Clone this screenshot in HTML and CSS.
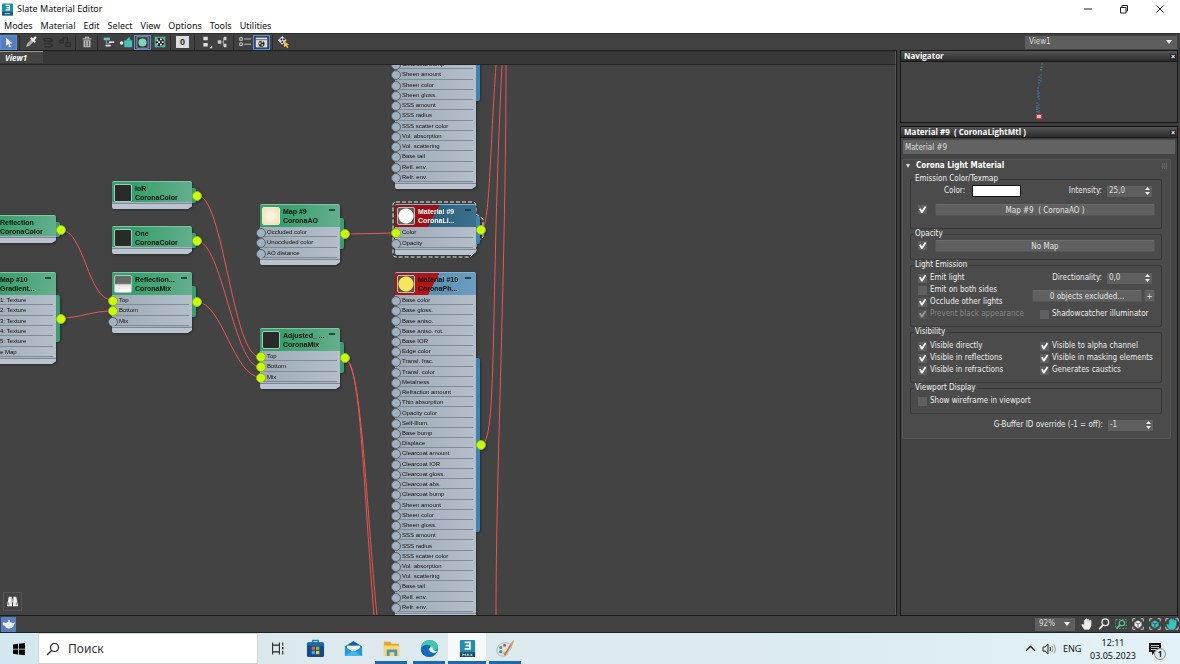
FILE: index.html
```html
<!DOCTYPE html>
<html lang="en">
<head>
<meta charset="utf-8">
<title>Slate Material Editor</title>
<link rel="stylesheet" href="styles.css">
</head>
<body>
<header class="titlebar">
  <svg class="app-logo" viewBox="0 0 12 13"><rect x="0" width="12" height="13" rx="1" fill="#1a8fae"/><rect y="9" width="12" height="4" fill="#1b5870"/><path d="M4 2h4v5H4M5 4.500h3" fill="none" stroke="#fff" stroke-width="1.300"/><path d="M3 11h6" stroke="#b8dbe5"/></svg>
  <h1>Slate Material Editor</h1>
  <div class="window-buttons">
    <button aria-label="Minimize"><svg viewBox="0 0 10 10"><path d="M1 5h8"/></svg></button>
    <button aria-label="Restore"><svg viewBox="0 0 10 10"><path d="M1.500 3.500h5.500v5.500h-5.500zM3 3.500V1.500h5.500v5.500H7"/></svg></button>
    <button aria-label="Close"><svg viewBox="0 0 10 10"><path d="M1.500 1.500l7 7M8.500 1.500l-7 7"/></svg></button>
  </div>
</header>
<nav class="menubar">
  <button>Modes</button><button>Material</button><button>Edit</button><button>Select</button><button>View</button><button>Options</button><button>Tools</button><button>Utilities</button>
</nav>
<div class="toolbar">
  <button class="on fill" aria-label="Select"><svg viewBox="0 0 16 16"><path d="M5 2v10l2.500-2 1.700 4 2-1-1.700-3.700H13z" fill="#f4e9e4"/></svg></button>
  <i class="sep"></i>
  <button aria-label="Pick material"><svg viewBox="0 0 16 16"><path d="M3 13l1-3 5-5 2 2-5 5z" fill="#aaa" stroke="#ddd" stroke-width=".6"/><path d="M8.500 4l3.500 3.500M10 6l3-3" stroke="#eee" stroke-width="2.600" stroke-linecap="round"/></svg></button>
  <button aria-label="Put material to scene" disabled><svg viewBox="0 0 16 16"><path d="M3 4h8l2 2-2 1H4zM3 10h8l2 2-2 1.500H4M9 8l4-1" fill="none" stroke="#2b2b2b" stroke-width="1.300"/></svg></button>
  <button aria-label="Assign material" disabled><svg viewBox="0 0 16 16"><path d="M3 7l4-4h4v4M2 6h4v3H2zM9 9h5v4H9z" fill="none" stroke="#2b2b2b" stroke-width="1.300"/></svg></button>
  <i class="sep"></i>
  <button aria-label="Delete"><svg viewBox="0 0 16 16"><path d="M3 4.500h10M6 4V2.500h4V4" fill="none" stroke="#ddd"/><path d="M4 6h8v8H4z" fill="#bbb"/><path d="M6.500 7v6M9.500 7v6" stroke="#444"/></svg></button>
  <i class="sep"></i>
  <button aria-label="Move children"><svg viewBox="0 0 16 16"><path d="M2 3h7v3H2z" fill="#5cc"/><path d="M8 7h6v2H8zM4 11h6v2H4z" fill="#ddd"/><path d="M5 6v4h4" stroke="#aaa" fill="none"/></svg></button>
  <button aria-label="Hide unused nodeslots"><svg viewBox="0 0 16 16"><path d="M6 6h9v8H6z" fill="#45c3b5"/><path d="M8 6l4-4 1 4z" fill="#45c3b5"/><circle cx="3" cy="9" r="2" fill="#eee"/></svg></button>
  <button class="on" aria-label="Show shaded material"><svg viewBox="0 0 16 16"><path d="M1 1h14v14H1z" fill="#333" stroke="#aaa"/><circle cx="8" cy="8" r="5" fill="#7bd6c8"/></svg></button>
  <button aria-label="Show background"><svg viewBox="0 0 16 16"><path d="M2 2h12v12H2z" fill="#50b9a8"/><circle cx="8" cy="8" r="5" fill="#222"/><path d="M4 5h2v2H4zM8 4h2v2H8zM6 7h2v2H6zM10 7h2v2h-2zM4 9h2v2H4zM8 10h2v2H8z" fill="#fff"/></svg></button>
  <i class="sep"></i>
  <button class="channel" aria-label="Material ID channel">0</button>
  <i class="sep"></i>
  <button aria-label="Lay out vertical"><svg viewBox="0 0 16 16"><path d="M5 2h5v4H5zM5 9h5v4H5zM15 12v3h-3z" fill="#ddd"/></svg></button>
  <button aria-label="Lay out children"><svg viewBox="0 0 16 16"><path d="M2 6h4v4H2zM9 2h3v4H9zM9 10h3v4H9z" fill="#ccc"/><path d="M6 8h3M8.500 3v10" stroke="#aaa"/></svg></button>
  <i class="sep"></i>
  <button aria-label="Parameter list"><svg viewBox="0 0 16 16"><path d="M7 4.500h8M7 10.500h8" stroke="#ccc"/><path d="M2 3h3v3H2zM2 9h3v3H2z" fill="none" stroke="#ddd"/></svg></button>
  <button class="on" aria-label="Material map browser"><svg viewBox="0 0 16 16"><path d="M1 2h14v12H1z" fill="#ddd"/><path d="M1 4.500h14" stroke="#555"/><circle cx="8" cy="9.500" r="3.800" fill="#222"/><path d="M5 8h2v2H5zM8 6h2v2H8zM8 10h2v2H8z" fill="#eee"/></svg></button>
  <i class="sep"></i>
  <button aria-label="Select by material"><svg viewBox="0 0 16 16"><path d="M6 1l5 5-5 5-5-5z" fill="#ddd"/><path d="M4 4h2v2H4zM7 4h2v2H7zM5 7h2v2H5z" fill="#222"/><path d="M8 7v7l2-1.500 2 2.500 1-1-1.500-3H14z" fill="#f2c14a"/></svg></button>
  <label class="combo view-combo"><select aria-label="View"><option>View1</option></select></label>
</div>

<main class="workspace">
  <section class="view">
    <div class="tabs"><button class="tab">View1</button></div>
    <div class="canvas">
      <svg class="wires" width="100%" height="100%">
        <path d="M61 165C84 165 88 235 112 235M61 253C80 253 92 246 112 246M197 130C224 130 232 292 260 292M197 176C222 176 234 302 260 302M197 237C222 237 234 312 260 312M345 169L398 168M345 294C360 294 362 400 374 551M345 294C362 300 366 440 377 551M481 165C490 165 490 80 496 0M481 380C498 380 490 240 502 0M496 551C496 400 506 200 506 0"/>
      </svg>

      <article class="node color cut reflection"><header><i class="thumb dark"></i><h2>Reflection<br>CoronaColor</h2></header><footer></footer><i class="out"></i></article>
      <article class="node cut gradient"><header><i class="thumb dark"></i><h2>Map #10<br>Gradient...</h2><i class="fold"></i></header>
        <ul><li>1: Texture</li><li>2: Texture</li><li>3: Texture</li><li>4: Texture</li><li>5: Texture</li><li>e Map</li></ul><footer></footer><i class="out"></i></article>
      <article class="node color ior"><header><i class="thumb dark"></i><h2>IoR<br>CoronaColor</h2></header><footer></footer><i class="out"></i></article>
      <article class="node color one"><header><i class="thumb dark"></i><h2>One<br>CoronaColor</h2></header><footer></footer><i class="out"></i></article>
      <article class="node mix"><header><i class="thumb half"></i><h2>Reflection...<br>CoronaMix</h2><i class="fold"></i></header>
        <ul><li class="linked">Top</li><li class="linked">Bottom</li><li>Mix</li></ul><footer></footer><i class="out"></i></article>
      <article class="node adjusted"><header><i class="thumb dark"></i><h2>Adjusted_ ...<br>CoronaMix</h2><i class="fold"></i></header>
        <ul><li class="linked">Top</li><li class="linked">Bottom</li><li class="linked">Mix</li></ul><footer></footer><i class="out"></i></article>
      <article class="node ao"><header><i class="thumb cream"></i><h2>Map #9<br>CoronaAO</h2><i class="fold"></i></header>
        <ul><li>Occluded color</li><li>Unoccluded color</li><li>AO distance</li></ul><footer></footer><i class="out"></i></article>

      <article class="node blue upper">
        <ul><li>Clearcoat bump</li><li>Sheen amount</li><li>Sheen color</li><li>Sheen gloss.</li><li>SSS amount</li><li>SSS radius</li><li>SSS scatter color</li><li>Vol. absorption</li><li>Vol. scattering</li><li>Base tail</li><li>Refl. env.</li><li>Refr. env.</li></ul><footer></footer><i class="out"></i></article>

      <article class="node blue light">
        <svg class="marquee" viewBox="0 0 92 58"><path d="M4 1H80Q84 1 84 5V13L91 18V36L84 42V50L78 56H4Q1 56 1 53V4Q1 1 4 1Z"/></svg>
        <header><i class="thumb ball"></i><h2>Material #9<br>CoronaLi...</h2><i class="fold"></i></header>
        <ul><li class="linked">Color</li><li>Opacity</li></ul><footer></footer><i class="out"></i></article>

      <article class="node blue physical"><header><i class="thumb ball yellow"></i><h2>Material #10<br>CoronaPh...</h2><i class="fold"></i></header>
        <ul><li>Base color</li><li>Base gloss.</li><li>Base aniso.</li><li>Base aniso. rot.</li><li>Base IOR</li><li>Edge color</li><li>Transl. frac.</li><li>Transl. color</li><li>Metalness</li><li>Refraction amount</li><li>Thin absorption</li><li>Opacity color</li><li>Self-Illum.</li><li>Base bump</li><li>Displace</li><li>Clearcoat amount</li><li>Clearcoat IOR</li><li>Clearcoat gloss.</li><li>Clearcoat abs.</li><li>Clearcoat bump</li><li>Sheen amount</li><li>Sheen color</li><li>Sheen gloss.</li><li>SSS amount</li><li>SSS radius</li><li>SSS scatter color</li><li>Vol. absorption</li><li>Vol. scattering</li><li>Base tail</li><li>Refl. env.</li><li>Refr. env.</li></ul><footer></footer><i class="out"></i></article>

      <button class="find" aria-label="Find"><svg viewBox="0 0 16 16"><path d="M4 3h3l.5 10H2zM9 3h3l2 10H8.500z" fill="#f2f2f2"/><path d="M7 5h2v4H7z" fill="#bbb"/><path d="M4 9v3M12 9v3" stroke="#777"/></svg></button>
    </div>
  </section>

  <aside class="side">
    <section class="panel">
      <header class="panel-head"><h2>Navigator</h2><button aria-label="Close navigator">×</button></header>
      <div class="navigator">
        <svg viewBox="0 0 20 60"><path d="M13 1v5M12 7v3M12 12v8M10 14v10M9 25v12M10 30v8M8 40v10M10 42v8" stroke="#3f6486" stroke-width="1.500" stroke-dasharray="2 1"/><path d="M12 5v4M8 45v5M10 50v4" stroke="#5a8f7c" stroke-dasharray="1 1"/><path d="M7.500 52.500h5v4h-5z" fill="#e8b8b8" stroke="#d83c42"/></svg>
      </div>
    </section>
    <section class="panel params">
      <header class="panel-head"><h2>Material #9&nbsp; ( CoronaLightMtl )</h2><button aria-label="Close parameters">×</button></header>
      <input class="name" aria-label="Material name" value="Material #9">
      <div class="rollout">
        <h3>Corona Light Material<i class="grip"></i></h3>
        <fieldset class="emission"><legend>Emission Color/Texmap</legend>
          <div class="row first"><span class="lbl-color">Color:</span><button class="swatch" aria-label="Color"></button><label class="spin"><span>Intensity:</span><input value="25,0"><i></i></label></div>
          <div class="row map"><input type="checkbox" checked aria-label="Use emission map"><button class="btn">Map #9&nbsp; ( CoronaAO )</button></div>
        </fieldset>
        <fieldset class="opacity"><legend>Opacity</legend>
          <div class="row map"><input type="checkbox" checked aria-label="Use opacity map"><button class="btn">No Map</button></div>
        </fieldset>
        <fieldset class="cols emit"><legend>Light Emission</legend>
          <div class="col">
            <label><input type="checkbox" checked>Emit light</label>
            <label><input type="checkbox">Emit on both sides</label>
            <label><input type="checkbox" checked>Occlude other lights</label>
            <label class="off"><input type="checkbox" checked disabled>Prevent black appearance</label>
          </div>
          <div class="col right">
            <label class="spin"><span>Directionality:</span><input value="0,0"><i></i></label>
            <div class="exclude"><button class="btn">0 objects excluded...</button><button class="btn plus">+</button></div>
            <label><input type="checkbox">Shadowcatcher illuminator</label>
          </div>
        </fieldset>
        <fieldset class="cols vis"><legend>Visibility</legend>
          <div class="col">
            <label><input type="checkbox" checked>Visible directly</label>
            <label><input type="checkbox" checked>Visible in reflections</label>
            <label><input type="checkbox" checked>Visible in refractions</label>
          </div>
          <div class="col right">
            <label><input type="checkbox" checked>Visible to alpha channel</label>
            <label><input type="checkbox" checked>Visible in masking elements</label>
            <label><input type="checkbox" checked>Generates caustics</label>
          </div>
        </fieldset>
        <fieldset class="cols viewport"><legend>Viewport Display</legend>
          <div class="col"><label><input type="checkbox">Show wireframe in viewport</label></div>
        </fieldset>
        <label class="spin gbuffer"><span>G-Buffer ID override (-1 = off):</span><input value="-1"><i></i></label>
      </div>
    </section>
  </aside>
</main>

<footer class="status">
  <button class="teapot" aria-label="Render preview"><svg viewBox="0 0 16 16"><path d="M3.500 7Q8 4.500 12.500 7l2.500-1-2 4.500Q12 13 8 13t-4.500-3Q0 9 1 7t3 0" fill="#eee"/><circle cx="8" cy="4.500" r="1.200" fill="#eee"/></svg></button>
  <label class="combo zoom"><select aria-label="Zoom"><option>92%</option></select></label>
  <button aria-label="Pan"><svg viewBox="0 0 16 16"><path d="M5 14L2 9l1-1 2 2V4q1-1 1.500 0V8 2.500q1-1 1.500 0V8l.5-5q1-1 1.500 0V8l1-4q1-.5 1.500 0V10l-2 4z" fill="#eee" stroke="#eee" stroke-width=".8"/></svg></button>
  <button aria-label="Zoom"><svg viewBox="0 0 16 16"><circle cx="9.500" cy="6" r="3.800" fill="none" stroke="#eee" stroke-width="1.500"/><path d="M7 9l-4.500 5" stroke="#eee" stroke-width="2"/></svg></button>
  <button aria-label="Zoom region"><svg viewBox="0 0 16 16"><path d="M2 3h12v10H2z" fill="none" stroke="#4fb184" stroke-dasharray="2 1.500"/><circle cx="9" cy="7" r="3" fill="none" stroke="#5cc79b" stroke-width="1.300"/><path d="M7 9l-4 4" stroke="#5cc79b" stroke-width="2"/></svg></button>
  <button aria-label="Zoom extents"><svg viewBox="0 0 16 16"><path d="M2 5V2h3M11 2h3v3M14 11v3h-3M5 14H2v-3" fill="none" stroke="#ddd"/><path d="M8 4l4 2v4l-4 3-4-3V6z" fill="#eee"/><path d="M5 6.500l3 1.500 3-1.500M8 8v4" stroke="#555" fill="none"/></svg></button>
  <button aria-label="Zoom extents selected"><svg viewBox="0 0 16 16"><path d="M2 5V2h3M11 2h3v3M14 11v3h-3M5 14H2v-3" fill="none" stroke="#ddd"/><path d="M8 4l4 2v4l-4 3-4-3V6z" fill="#39c4c4"/><path d="M5 6.500l3 1.500 3-1.500M8 8v4" stroke="#245" fill="none"/></svg></button>
  <button aria-label="Pan to selected"><svg viewBox="0 0 16 16"><path d="M1 5V2h3M12 2h3v3M15 11v3h-3M4 14H1v-3" fill="none" stroke="#ddd"/><path d="M5 14L2 9l1-1 2 2V4q1-1 1.500 0V8 2.500q1-1 1.500 0V8l.5-5q1-1 1.500 0V8l1-4q1-.5 1.500 0V10l-2 4z" fill="#39c4c4" stroke="#39c4c4" stroke-width=".8"/></svg></button>
</footer>

<div class="taskbar">
  <button class="start" aria-label="Start"><svg viewBox="0 0 14 14"><path d="M1 2.500l5-.7v5H1zM6.800 1.700L13 1v5.800H6.800zM1 7.500h5v5l-5-.7zM6.800 7.500H13V13.300l-6.200-.8z" fill="#050505"/></svg></button>
  <label class="search"><svg viewBox="0 0 14 14"><circle cx="8.500" cy="5.500" r="4" fill="none" stroke="#222" stroke-width="1.200"/><path d="M5.500 8.500L1 13" stroke="#222" stroke-width="1.200"/></svg><input placeholder="Поиск" aria-label="Поиск"></label>
  <button class="app" aria-label="Task view"><svg viewBox="0 0 20 20"><path d="M3.500 2v3.500h9V2M3.500 18v-3.500h9V18M3.500 6v8M12.500 6v8M17 2v4M17 13v5" fill="none" stroke="#222" stroke-width="1.400"/><path d="M16 8h2v3h-2z" fill="#222"/></svg></button>
  <button class="app" aria-label="Store"><svg viewBox="0 0 20 20"><path d="M7 4V1.500h6V4" fill="none" stroke="#1c83bd" stroke-width="1.500"/><rect x="1" y="3.500" width="18" height="15.500" rx="2" fill="#164a80"/><path d="M1 4h18v3H1z" fill="#1b6dab"/><path d="M6 8h3.500v3.500H6z" fill="#ef5a37"/><path d="M10.500 8H14v3.500h-3.500z" fill="#83bd3c"/><path d="M6 12.500h3.500V16H6z" fill="#32a8e8"/><path d="M10.500 12.500H14V16h-3.500z" fill="#f6c13b"/></svg></button>
  <button class="app" aria-label="Mail"><svg viewBox="0 0 20 20"><path d="M1 8l9-6 9 6v10H1z" fill="#17609f"/><path d="M3 7h14v6H3z" fill="#e9f5fb"/><path d="M1 8l9 6 9-6v10H1z" fill="#2398e0"/><path d="M1 18l9-6 9 6z" fill="#45b8ee"/></svg></button>
  <button class="app run" aria-label="Explorer"><svg viewBox="0 0 20 20"><path d="M2 3h7l1 2h8v13H2z" fill="#e0a92d"/><path d="M2 7h16v11H2z" fill="#fbd670"/><path d="M5 18v-6q0-1 1-1h9q1 0 1 1v6h-3v-4H8v4z" fill="#4799bf"/></svg></button>
  <button class="app run" aria-label="Edge"><svg viewBox="0 0 20 20"><circle cx="10" cy="10" r="9" fill="#1575bd"/><path d="M1 9C3-2 18-1 19 8c0 5-7 5-7 2 1-4-5-6-11-1z" fill="#40c6ae"/><path d="M1 10c3-5 9-4 9-1-3 4 1 9 7 6-6 7-17 3-16-5z" fill="#1768b5"/><path d="M11 8q-3 4 1 6t6-1q-5 0-5-5" fill="#e6eff1"/></svg></button>
  <button class="app run active" aria-label="3ds Max"><svg viewBox="0 0 20 20"><rect x="2" y="1" width="16" height="18" rx="1" fill="#218eab"/><path d="M2 14h16v5H2z" fill="#174b62"/><path d="M7 3.500h5.500v7H7M8 7h4.500" fill="none" stroke="#fff" stroke-width="1.800"/><path d="M5 18v-2.500l1.500 1.500 1.500-1.500V18M9.500 18l1-2.500 1 2.500M13 15.500l2 2.500M15 15.500L13 18" fill="none" stroke="#eee" stroke-width=".8"/></svg></button>
  <button class="app run" aria-label="Paint"><svg viewBox="0 0 20 20"><path d="M1 12C1 5 9 2 14 5c5 4 1 6-1 8s0 5-5 5-7-2-7-6z" fill="#dce2e8" stroke="#8a97a3" stroke-width=".6"/><circle cx="5" cy="9" r="1.600" fill="#49a153"/><circle cx="9" cy="6.500" r="1.600" fill="#d9513e"/><circle cx="5" cy="13.500" r="1.600" fill="#357cc1"/><circle cx="9" cy="15" r="1.500" fill="#e6b63b"/><path d="M9 17l8-13" stroke="#b88149" stroke-width="2"/><path d="M15 6l3-5 1 1-2 5z" fill="#d8a96d"/></svg></button>
  <div class="tray">
    <svg class="chev" viewBox="0 0 10 10"><path d="M1 7l4-4 4 4" fill="none" stroke="#222" stroke-width="1.200"/></svg>
    <svg class="vol" viewBox="0 0 14 12"><path d="M1 4h2l3-3v10L3 8H1z" fill="none" stroke="#222"/><path d="M8 4q1 2 0 4" fill="none" stroke="#222"/><path d="M10 3q2 3 0 6M12 1.500q3 4.500 0 9" fill="none" stroke="#999"/></svg>
    <span class="lang">ENG</span>
    <time><span>12:11</span><span>03.05.2023</span></time>
    <button class="notes" aria-label="Notifications"><svg viewBox="0 0 14 14"><path d="M1 1h12v9H7l-3 3v-3H1z" fill="#111"/><path d="M3 3.500h8M3 5.500h8M3 7.500h6" stroke="#dcebf0" stroke-width=".8"/></svg><b>1</b></button>
  </div>
</div>
</body>
</html>
```
FILE: styles.css
```css
* { box-sizing: border-box; }
body { margin: 0; height: 100vh; display: flex; flex-direction: column; overflow: hidden; background: #444; font: 9px/12px "Noto Sans", "Open Sans", sans-serif; color: #eee; }
button, input, select { font: inherit; color: inherit; border: 0; padding: 0; margin: 0; background: none; border-radius: 0; }
h1, h2, h3, ul, fieldset { margin: 0; padding: 0; font: inherit; }
svg { display: block; }

.titlebar { display: flex; align-items: center; height: 18px; padding: 0 2px; background: #fff; color: #111; }
.app-logo { width: 11px; height: 13px; }
.titlebar h1 { flex: 1; margin-left: 4px; font-size: 9px; }
.window-buttons { display: flex; }
.window-buttons button { width: 36px; height: 18px; display: grid; place-items: center; }
.window-buttons svg { width: 10px; height: 10px; fill: none; stroke: #222; }
.menubar { display: flex; gap: 8px; height: 15px; padding-left: 4px; background: #fff; color: #111; font-size: 9px; }

.toolbar { display: flex; align-items: center; height: 17px; background: #414141; border-top: 1px solid #2c2c2c; }
.toolbar button { width: 17px; height: 15px; display: grid; place-items: center; flex: none; }
.toolbar svg { width: 14px; height: 14px; }
.toolbar .on { background: #34465f; border: 1px solid #5c8fd6; }
.toolbar .fill { background: #5480c0; }
.toolbar .on svg { width: 13px; height: 13px; }
.toolbar .channel { width: 13px; height: 12px; margin: 0 3px; background: #ddd; color: #222; font: bold 9px/12px "Liberation Sans", sans-serif; }
.sep { flex: none; width: 1px; height: 15px; margin: 0 2px; background: #2a2a2a; }
.combo { position: relative; display: flex; background: #5e5e5e; color: #ddd; }
.combo select { flex: 1; appearance: none; padding-left: 4px; font: 8px/12px "DejaVu Sans Condensed", "DejaVu Sans", sans-serif; }
.combo::after { content: ""; position: absolute; right: 5px; top: 50%; margin-top: -2px; border: 3px solid transparent; border-top: 4px solid #eee; border-bottom: 0; }
.view-combo { width: 155px; height: 13px; margin-left: auto; border-right: 3px solid #414141; }

.workspace { flex: 1; min-height: 0; display: flex; gap: 3px; background: #3c3c3c; }
.view { flex: 1; min-width: 0; display: flex; flex-direction: column; border: 1px solid #1c1c1c; border-left: 0; }
.tabs { height: 14px; background: #383838; border-bottom: 1px solid #242424; border-right: 1px solid #555; }
.tab { width: 43px; height: 12px; padding-left: 5px; background: #454545; border-top: 1px solid #999; text-align: left; font: italic bold 8px/11px "Noto Sans", sans-serif; color: #fff; }
.canvas { position: relative; flex: 1; overflow: hidden; background: #434343; border-right: 1px solid #555; }
.wires { position: absolute; inset: 0; fill: none; stroke: #ea5550; stroke-width: 1; }

.node { position: absolute; width: 80px; color: #111; font: 6px/10px "Liberation Sans", Arial, sans-serif; filter: drop-shadow(1px 1px 1px #151c2099); }
.node header { position: relative; z-index: 1; height: 23px; display: flex; padding: 2px; gap: 3px; border-radius: 2px 2px 0 0; background: linear-gradient(100deg, #36a16d 30%, #67ae8f); border-top: 1px solid #82c4a5; }
.node h2 { flex: 1; white-space: nowrap; font: bold 7px/9px "Liberation Sans", Arial, sans-serif; color: #06130c; }
.node.color header { height: 21px; }
.thumb { width: 18px; height: 18px; border: 1px solid #a9c7b8; border-radius: 2px; flex: none; }
.dark { background: #292b2b; }
.half { background: linear-gradient(#686868 45%, #a58b8b 50%, #e3e3e3 55%, #fff); }
.cream { background: radial-gradient(#faf3dc 25%, #ebdda8); border-color: #f6efcf; }
.ball { background: radial-gradient(circle, #fff 7px, #62605c 8px); }
.ball.yellow { background: radial-gradient(circle, #f4e75b 7px, #5d5140 8px); }
.fold { position: absolute; right: 5px; top: 4px; width: 6px; height: 2px; background: #145038; }
.node ul { position: relative; z-index: 1; display: grid; grid-auto-rows: 1fr; list-style: none; background: linear-gradient(90deg, #9eabb7, #b4bfca); }
.node li { position: relative; display: flex; align-items: center; padding-left: 7px; white-space: nowrap; }
.node li::after { content: ""; position: absolute; left: 4px; right: 3px; bottom: 0; height: 1px; background: #7f8c98; }
.node li::before, .out::after { content: ""; position: absolute; left: -4px; top: 1px; width: 8px; height: 8px; border-radius: 50%; background: #a3b0bd; border: 1px solid #52606c; }
.node .linked::before, .out::after { background: #c8ff0a; border-color: #91b520; }
.node footer { position: relative; z-index: 1; height: 7px; background: linear-gradient(#a8b3be 1px, #7d8995 1px 2px, #bac4cf 2px); border-radius: 0 0 0 2px; clip-path: polygon(0 0, 100% 0, 100% 60%, calc(100% - 4px) 100%, 0 100%); }
.out { position: absolute; right: -4px; width: 8px; height: 31px; top: 14px; border-radius: 2px; background: #3d9c70; }
.out::after { left: 4px; top: 50%; margin-top: -5px; }
.color .out { height: 15px; top: 7px; }

.cut { left: -24px; }
.cut header { gap: 4px; }
.cut li { padding-left: 24px; }
.reflection { top: 150px; }
.gradient { top: 207px; }
.gradient ul { height: 62px; }
.gradient .out { top: 23px; height: 47px; }
.ior { left: 112px; top: 116px; }
.one { left: 112px; top: 161px; }
.mix { left: 112px; top: 207px; }
.adjusted { left: 260px; top: 263px; }
.ao { left: 260px; top: 139px; }
.mix ul, .adjusted ul, .ao ul { height: 31px; }
.blue { left: 395px; width: 81px; }
.blue .out { background: #3f83b0; }
.blue header { background: linear-gradient(118deg, #b51217 0 48%, transparent 48%), linear-gradient(90deg, #4d84aa, #6d9dc0); border-top-color: #89b1cc; }
.upper { top: -6px; }
.upper ul { height: 123px; }
.upper .out { top: -60px; height: 102px; }
.light { top: 139px; }
.light ul { height: 21px; }
.light .out { top: 12px; height: 28px; }
.light header { background: linear-gradient(118deg, #9d1015 0 48%, transparent 48%), linear-gradient(90deg, #24536f, #3a718f); }
.light h2 { color: #fff; }
.light .fold { background: #183b50; }
.marquee { position: absolute; left: -3px; top: -3px; width: 92px; height: 58px; fill: none; stroke: #eee; stroke-width: 1; stroke-dasharray: 4 2; }
.physical { top: 207px; }
.physical ul { height: 317px; }
.physical .out { top: 86px; height: 174px; }
.find { position: absolute; left: 3px; bottom: 4px; width: 19px; height: 19px; border: 1px solid #555; display: grid; place-items: center; }
.find svg { width: 15px; height: 15px; }

.side { width: 280px; display: flex; flex-direction: column; gap: 3px; padding-right: 2px; font: 8px/12px "DejaVu Sans Condensed", "DejaVu Sans", sans-serif; }
.panel { border: 1px solid #181818; background: #444; }
.panel-head { display: flex; justify-content: space-between; height: 11px; padding: 0 1px 0 3px; background: linear-gradient(#555, #2c2c2c); border-bottom: 1px solid #181818; }
.panel-head h2 { font: bold 8px/10px "Open Sans", "Noto Sans", sans-serif; color: #fff; }
.panel-head button { font: bold 7px/6px "Liberation Sans", sans-serif; color: #fff; background: #222; height: 6px; width: 6px; margin-top: 3px; }
.navigator { height: 60px; display: flex; justify-content: center; }
.navigator svg { width: 20px; height: 60px; }
.params { flex: 1; padding: 0 2px; }
.params .panel-head { margin: 0 -2px; }
.name { display: block; width: 100%; height: 14px; margin-top: 2px; padding-left: 2px; background: #626262; color: #ddd; }
.rollout { margin: 5px 4px 0 -1px; padding: 0 8px 5px 7px; background: #4b4b4b; border: 1px solid #565656; border-radius: 2px; }
.rollout h3 { display: flex; align-items: center; height: 12px; margin: 0 0 2px -4px; font: bold 8px/12px "DejaVu Sans Condensed", "DejaVu Sans", sans-serif; color: #fff; }
.rollout h3::before { content: ""; border: 2px solid transparent; border-top: 4px solid #ddd; border-bottom: 0; margin-right: 6px; }
.grip { margin-left: auto; margin-right: -6px; width: 6px; height: 6px; background: repeating-linear-gradient(90deg, #666 0 1px, transparent 1px 2px); }
fieldset { min-width: 0; border: 1px solid #383838; border-radius: 2px; padding: 0 6px 0 7px; }
legend { padding: 0 1px; margin-left: -4px; line-height: 10px; height: 10px; color: #f2f2f2; }
.emission { height: 55px; }
.opacity { height: 31px; }
.emit { height: 67px; }
.vis { height: 56px; }
.viewport { height: 31px; }
.row { display: flex; align-items: center; }
.first { height: 14px; }
.lbl-color { width: 49px; padding-left: 26px; }
.swatch { width: 49px; height: 12px; margin-left: 5px; background: #fff; border: 1px solid #111; }
.map { height: 13px; gap: 8px; }
.first + .map { margin-top: 5px; }
.map .btn { flex: 1; }
.btn { height: 12px; line-height: 11px; background: #606060; border: 1px solid #555; border-top-color: #6b6b6b; border-radius: 2px; text-align: center; color: #e4e4e4; }
input[type=checkbox] { appearance: none; width: 9px; height: 9px; margin: 0; background: #5f5f5f; flex: none; display: block; }
input[type=checkbox]:checked::after { content: ""; display: block; width: 9px; height: 9px; background: #f4f4f4; clip-path: polygon(12% 45%, 30% 36%, 43% 60%, 76% 12%, 92% 22%, 50% 88%, 36% 88%); }
.spin { display: flex; align-items: center; justify-content: flex-end; height: 12px; position: relative; margin-left: auto; }
.spin input { width: 45px; height: 11px; margin-left: 5px; padding-left: 2px; background: #5f5f5f; color: #ddd; }
.spin i { position: absolute; right: 2px; top: 2px; width: 5px; height: 8px; background: #eee; clip-path: polygon(50% 0, 100% 38%, 0 38%, 0 62%, 100% 62%, 50% 100%, 0 62%, 0 38%); }
.first .spin, .emit .spin { margin-right: 3px; }
.cols { display: flex; justify-content: space-between; }
.col { display: flex; flex-direction: column; padding-top: 2px; }
.vis .col { padding-top: 3px; }
.col label { display: flex; align-items: center; gap: 3px; height: 12px; white-space: nowrap; }
.col.right { width: 115px; }
.emit .col.right { width: 123px; }
.emit .col.right > label:last-child { margin-left: 8px; margin-top: 6px; }
.emit .spin { gap: 0; align-self: stretch; }
.exclude { display: flex; gap: 2px; margin-top: 6px; }
.exclude .btn { flex: 1; }
.exclude .plus { flex: none; width: 11px; }
.off { color: #858585; }
.off input { opacity: .45; }
.gbuffer { margin: 5px 9px 2px 0; }

.status { display: flex; align-items: center; height: 17px; background: #414141; border-bottom: 1px solid #222; }
.status button { width: 17px; height: 15px; display: grid; place-items: center; }
.status svg { width: 14px; height: 14px; }
.teapot { margin-left: 1px; margin-right: auto; }
.status .teapot { width: 15px; background: #5480c0; }
.zoom { width: 40px; height: 13px; margin-right: 3px; }

.taskbar { display: flex; height: 31px; background: linear-gradient(90deg, #d2e7ef, #dde9ec 30%, #dcebf0 70%, #e2f2f7); color: #111; }
.start { width: 38px; display: grid; place-items: center; }
.start svg { width: 14px; height: 14px; }
.search { width: 220px; display: flex; align-items: center; gap: 8px; padding-left: 7px; background: #fff; border: 1px solid #ccd4d8; }
.search svg { width: 14px; height: 14px; }
.search input { width: 150px; font-size: 12px; outline: 0; }
.search input::placeholder { color: #333; opacity: 1; }
.app { width: 38px; display: grid; place-items: center; border-bottom: 3px solid transparent; border-top: 3px solid transparent; }
.app svg { width: 19px; height: 19px; }
.app:nth-of-type(2) svg { width: 15px; height: 15px; }
.run { background: linear-gradient(#1b69b3, #1b69b3) bottom / 32px 3px no-repeat border-box; }
.active { background: linear-gradient(#1b69b3, #1b69b3) bottom / 38px 3px no-repeat border-box, #f6f9fa; }
.tray { margin-left: auto; display: flex; align-items: center; padding-right: 18px; font-size: 9px; }
.chev { width: 11px; height: 11px; margin-right: 6px; }
.vol { width: 14px; height: 12px; margin-right: 7px; }
.lang { width: 27px; }
time { width: 44px; display: grid; text-align: center; line-height: 13px; }
.notes { position: relative; margin-left: 14px; }
.notes svg { width: 14px; height: 14px; }
.notes b { position: absolute; left: 6px; top: 6px; width: 12px; height: 12px; border: 1px solid #888; border-radius: 50%; background: #dcebf0; font: bold 8px/10px "Noto Sans", sans-serif; text-align: center; }
```
